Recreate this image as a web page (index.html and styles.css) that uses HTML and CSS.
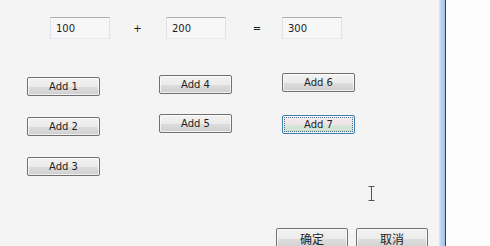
FILE: index.html
```
<!DOCTYPE html>
<html lang="zh">
<head>
<meta charset="utf-8">
<title>Add</title>
<link rel="stylesheet" href="styles.css">
</head>
<body>
<div class="screen">
  <div class="dialog">
    <div class="sum-row">
      <input class="num" type="text" value="100">
      <span class="op op-plus">+</span>
      <input class="num" type="text" value="200">
      <span class="op op-eq">=</span>
      <input class="num" type="text" value="300">
    </div>

    <div class="btn-cols">
      <div class="col col1">
        <button class="btn">Add 1</button>
        <button class="btn">Add 2</button>
        <button class="btn">Add 3</button>
      </div>
      <div class="col col2">
        <button class="btn">Add 4</button>
        <button class="btn">Add 5</button>
      </div>
      <div class="col col3">
        <button class="btn">Add 6</button>
        <button class="btn btn-hot">Add 7</button>
      </div>
    </div>

    <div class="footer">
      <button class="btn btn-cn">确定</button>
      <button class="btn btn-cn">取消</button>
    </div>

    <!-- mouse cursor -->
    <svg class="ibeam" width="7" height="15" viewBox="0 0 7 15">
      <path d="M0.5 0.5h6M0.5 14.5h6M3.5 0.5v14" stroke="#555" stroke-width="1" fill="none"/>
    </svg>
  </div>
  <div class="edge"></div>
  <div class="edge-dark"></div>
  <div class="outside"></div>
</div>
</body>
</html>
```

FILE: styles.css
```
*{margin:0; padding:0; box-sizing:border-box;}
html, body{width:490px; height:246px; overflow:hidden;}
body{font:10px "DejaVu Sans", Verdana, "Noto Sans CJK SC", sans-serif; color:#1e1e1e; background:#f4f4f4;}

.screen{display:grid; grid-template-columns:439px 6px 1px 1fr; height:246px;}

.dialog{position:relative; display:flex; flex-direction:column; height:246px; padding-top:17px; background:#f4f4f4;}

/* top row */
.sum-row{display:flex; align-items:center; height:22px; padding-left:50px;}
.num{width:60px; height:22px; padding:0 5px; font:inherit; color:#1e1e1e;
  background:#f7f7f7; border:1px solid #e2e3ea; border-top-color:#abadb3; border-bottom-color:#e3e9ef; outline:none;}
.op{width:56px; text-align:center;}
.op-plus{padding-right:1px;}
.op-eq{padding-left:6px;}

/* button columns */
.btn-cols{display:flex; align-items:flex-start; padding-left:27px; margin-top:34px;}
.col{display:flex; flex-direction:column; width:73px;}
.col1{margin-top:4px; gap:21px;}
.col2{margin-top:2px; gap:20px; margin-left:59px;}
.col3{gap:23px; margin-left:50px;}

.btn{width:73px; height:19px; font:inherit; color:#1e1e1e; cursor:default;
  border:1px solid #707070; border-radius:2px;
  background:linear-gradient(#f2f2f2 0%, #ebebeb 50%, #dddddd 51%, #cfcfcf 100%);
  box-shadow:inset 0 0 0 1px rgba(255,255,255,0.7);}
.btn-hot{border-color:#3c7fb1;
  background:linear-gradient(#f6eef0 0%, #f0e2e6 50%, #d6e8da 51%, #c8dfcd 100%);
  outline:1px dotted #556b80; outline-offset:-3px;}

/* bottom buttons */
.footer{display:flex; gap:8px; justify-content:flex-end; margin-top:auto; margin-bottom:-4px; padding-right:11px;}
.btn-cn{width:72px; height:22px; font:12px "Noto Sans CJK SC", sans-serif; padding-bottom:2px;}

.ibeam{position:absolute; left:368px; top:186px;}

/* window edge */
.edge{background:linear-gradient(90deg, #dbe7f7, #b8d1f0 40%, #a6c3ea);}
.edge-dark{background:#2e3f5c;}
.outside{background:#fdfdfd;}
```
